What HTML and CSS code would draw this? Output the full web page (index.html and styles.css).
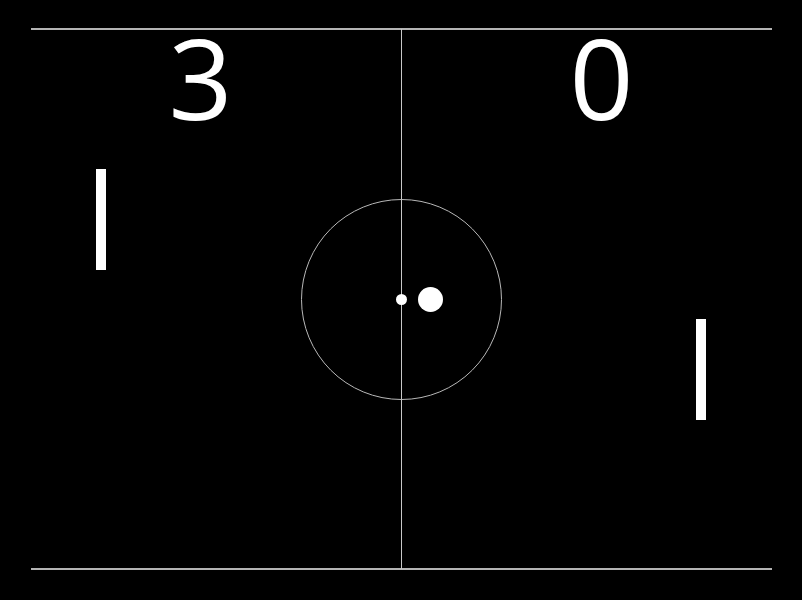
FILE: index.html
```html
<!DOCTYPE html>
<html>
<head>
<meta charset="utf-8">
<title>Pong</title>
<link rel="stylesheet" href="styles.css">
</head>
<body>
<div class="field">
  <svg class="court" width="802" height="600" viewBox="0 0 802 600">
    <line x1="31" y1="29" x2="772" y2="29" class="edge"/>
    <line x1="31" y1="569" x2="772" y2="569" class="edge"/>
    <line x1="401.5" y1="29" x2="401.5" y2="569" class="mid"/>
    <circle cx="401.5" cy="299.5" r="100" class="ring"/>
    <circle cx="401.5" cy="299.5" r="5.5" class="spot"/>
  </svg>
  <div class="scores">
    <div class="score">3</div>
    <div class="score">0</div>
  </div>
  <div class="paddle paddle-left"></div>
  <div class="paddle paddle-right"></div>
  <div class="ball"></div>
</div>
</body>
</html>
```
FILE: styles.css
```css
html, body {
  margin: 0;
  padding: 0;
  background: #000;
}
.field {
  position: relative;
  width: 802px;
  height: 600px;
  background: #000;
  overflow: hidden;
}
.court {
  position: absolute;
  left: 0;
  top: 0;
}
.edge {
  stroke: #b4b4b4;
  stroke-width: 2;
}
.mid {
  stroke: #c8c8c8;
  stroke-width: 1;
}
.ring {
  fill: none;
  stroke: #b8b8b8;
  stroke-width: 1;
}
.spot {
  fill: #fff;
}
.scores {
  position: relative;
  display: flex;
  width: 802px;
}
.score {
  flex: 1;
  text-align: center;
  color: #fff;
  font-family: "Open Sans", sans-serif;
  font-size: 112px;
  line-height: normal;
}
.paddle {
  position: absolute;
  width: 10px;
  height: 101px;
  background: #fff;
}
.paddle-left {
  left: 96px;
  top: 169px;
}
.paddle-right {
  left: 696px;
  top: 319px;
}
.ball {
  position: absolute;
  left: 418px;
  top: 287px;
  width: 25px;
  height: 25px;
  border-radius: 50%;
  background: #fff;
}
```
